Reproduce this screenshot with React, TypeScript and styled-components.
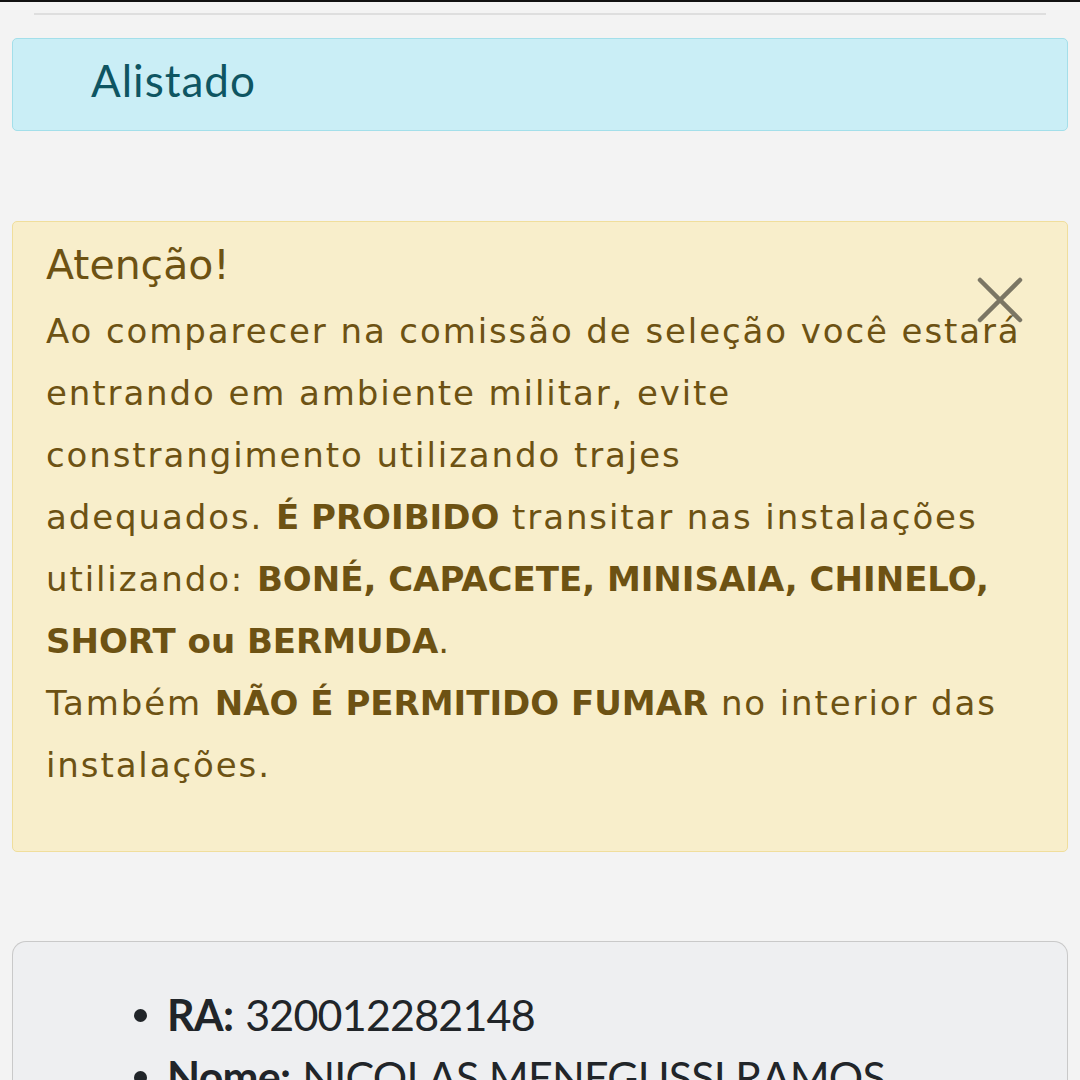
import React from "react";
import styled, { createGlobalStyle } from "styled-components";

const Global = createGlobalStyle`
  html, body { margin: 0; padding: 0; background: #f3f3f3; }
  body { font-family: Lato, "Open Sans", sans-serif; }
`;

const Page = styled.div`
  width: 1080px;
  height: 1080px;
  overflow: hidden;
  border-top: 2px solid #111;
  box-sizing: border-box;
  padding: 0 12px;
  display: flex;
  flex-direction: column;
  & > * { flex-shrink: 0; }
`;

const Rule = styled.hr`
  margin: 11px 22px 0;
  border: none;
  height: 2px;
  background: #dedede;
`;

const InfoAlert = styled.div`
  margin-top: 23px;
  height: 93px;
  box-sizing: border-box;
  background: #caeef6;
  border: 1.5px solid #a3dfea;
  border-radius: 5px;
  padding: 15px 0 0 78px;
  color: #0e5562;
  font-size: 44px;
  line-height: 53px;
  letter-spacing: 1px;
`;

const WarningAlert = styled.div`
  position: relative;
  margin-top: 90px;
  height: 631px;
  box-sizing: border-box;
  background: #f8eecb;
  border: 1.5px solid #f0de9c;
  border-radius: 5px;
  padding: 17px 33px 0 33px;
  color: #6d5213;
  font-family: "DejaVu Sans", "Open Sans", sans-serif;
`;

const Heading = styled.div`
  font-size: 41px;
  line-height: 53px;
  margin-bottom: 8px;
`;

const Body = styled.p`
  margin: 0;
  font-size: 34px;
  line-height: 62px;
  white-space: nowrap;
  letter-spacing: 1.9px;
  b { font-weight: 700; letter-spacing: 0; }
`;

const Close = styled.button`
  position: absolute;
  top: 53px;
  right: 42px;
  width: 50px;
  height: 50px;
  padding: 0;
  border: none;
  background: transparent;
  opacity: 0.5;
  color: #000;
  display: flex;
  align-items: center;
  justify-content: center;
`;

const Card = styled.div`
  margin-top: 89px;
  flex: 1;
  background: #eeeff1;
  border: 1.5px solid #c9c9c9;
  border-bottom: none;
  border-radius: 14px 14px 0 0;
  padding: 42px 0 0 121px;
  color: #212529;
`;

const List = styled.ul`
  list-style: none;
  margin: 0;
  padding: 0;
`;

const Item = styled.li`
  display: flex;
  align-items: center;
  font-size: 43px;
  line-height: 62px;
  letter-spacing: -0.8px;
  b { font-weight: 700; margin-right: 12px; }
`;

const Dot = styled.span`
  width: 13px;
  height: 13px;
  border-radius: 50%;
  background: #212529;
  margin-right: 20px;
  flex-shrink: 0;
`;

export default function App() {
  return (
    <>
      <Global />
      <Page>
        <Rule />
        <InfoAlert>Alistado</InfoAlert>
        <WarningAlert>
          <Heading>Atenção!</Heading>
          <Body>
            Ao comparecer na comissão de seleção você estará
            <br />
            entrando em ambiente militar, evite
            <br />
            constrangimento utilizando trajes
            <br />
            adequados. <b>É PROIBIDO</b> transitar nas instalações
            <br />
            utilizando: <b>BONÉ, CAPACETE, MINISAIA, CHINELO,</b>
            <br />
            <b>SHORT ou BERMUDA</b>.
            <br />
            Também <b>NÃO É PERMITIDO FUMAR</b> no interior das
            <br />
            instalações.
          </Body>
          <Close aria-label="Fechar">
            <svg width="46" height="46" viewBox="0 0 46 46">
              <path
                d="M3 3 L43 43 M43 3 L3 43"
                stroke="currentColor"
                strokeWidth="4.5"
                strokeLinecap="round"
              />
            </svg>
          </Close>
        </WarningAlert>
        <Card>
          <List>
            <Item>
              <Dot />
              <b>RA:</b> 320012282148
            </Item>
            <Item>
              <Dot />
              <b>Nome:</b> NICOLAS MENEGUSSI RAMOS
            </Item>
          </List>
        </Card>
      </Page>
    </>
  );
}
